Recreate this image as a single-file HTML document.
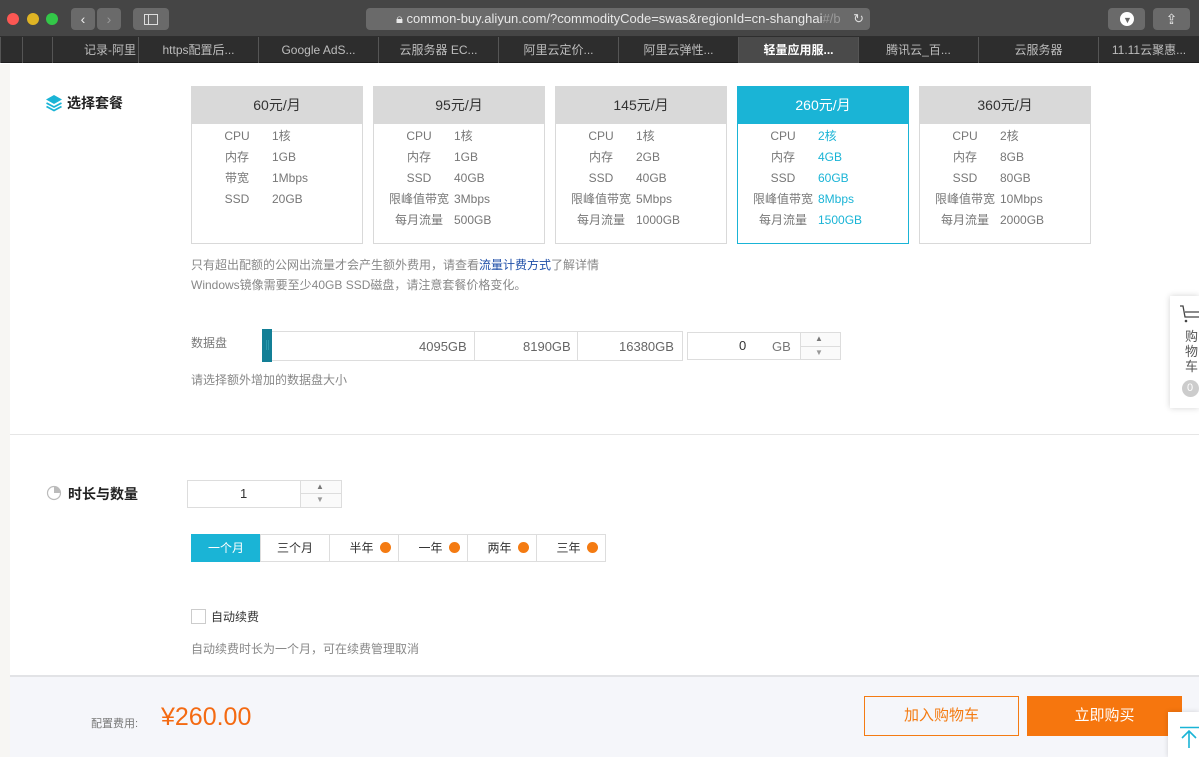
<!DOCTYPE html>
<html><head><meta charset="utf-8"><style>
*{margin:0;padding:0;box-sizing:border-box}
body{width:1199px;height:757px;overflow:hidden;position:relative;background:#fff;font-family:"Liberation Sans","Noto Sans CJK SC",sans-serif;color:#333}
.abs{position:absolute}
.tb{left:0;top:0;width:1199px;height:37px;background:#454545;border-bottom:1px solid #2e2e2e}
.btn{background:#6a6a6a;border-radius:4px;height:22px;top:8px}
.tabs{left:0;top:37px;width:1199px;height:26px;background:#2d2d2d;border-bottom:1px solid #1e1e1e}
.tab{position:absolute;top:0;height:26px;border-left:1px solid #555;color:#bdbdbd;font-size:12px;line-height:26px;text-align:center;width:120px}
.card{position:absolute;top:86px;width:172px;height:158px;border:1px solid #d9d9d9}
.card .h{height:37px;background:#d9d9d9;text-align:center;line-height:37px;font-size:14px;color:#333}
.card .r{position:relative;height:21px;font-size:12px;color:#777;line-height:21px}
.card .r .l{position:absolute;left:12px;width:66px;text-align:center}
.card .r .v{position:absolute;left:80px}
.card .b{padding-top:2px}
.sel{border-color:#1ab4d6}
.sel .h{background:#1ab4d6;color:#fff}
.sel .v{color:#1ab4d6}
.note{font-size:12px;color:#888}
.seg{position:absolute;top:534px;height:28px;width:70px;border:1px solid #ddd;font-size:12px;line-height:26px;text-align:center;color:#333;background:#fff}
.hui{display:inline-block;width:11px;height:11px;border-radius:50%;background:#f47b12;vertical-align:-1px;margin-left:6px}
</style></head><body>
<div class="abs tb"></div>
<div class="abs" style="left:7px;top:13px;width:12px;height:12px;border-radius:50%;background:#fc5753"></div>
<div class="abs" style="left:27px;top:13px;width:12px;height:12px;border-radius:50%;background:#dfb424"></div>
<div class="abs" style="left:46px;top:13px;width:12px;height:12px;border-radius:50%;background:#33c748"></div>
<div class="abs btn" style="left:71px;width:24px;color:#eee;font-size:14px;text-align:center;line-height:22px">&#8249;</div>
<div class="abs btn" style="left:97px;width:24px;color:#999;font-size:14px;text-align:center;line-height:22px">&#8250;</div>
<div class="abs btn" style="left:133px;width:36px"><div class="abs" style="left:11px;top:6px;width:14px;height:11px;border:1px solid #ddd"></div><div class="abs" style="left:15px;top:6px;width:1px;height:11px;background:#ddd"></div></div>
<div class="abs btn" style="left:366px;width:504px;color:#e8e8e8;font-size:13px;line-height:22px;padding-left:30px;white-space:nowrap;overflow:hidden">&#128274;&#xFE0E; common-buy.aliyun.com/?commodityCode=swas&amp;regionId=cn-shanghai<span style="color:#999">#/b</span><span class="abs" style="right:6px;top:0;color:#ddd">&#8635;</span></div>
<div class="abs btn" style="left:1108px;width:37px"><div class="abs" style="left:12px;top:4px;width:14px;height:14px;border-radius:50%;background:#fff"></div><div class="abs" style="left:15px;top:8px;color:#666;font-size:9px;line-height:8px">&#9660;</div></div>
<div class="abs btn" style="left:1153px;width:37px;color:#eee;text-align:center;line-height:22px;font-size:14px">&#8682;</div>
<div class="abs tabs">
<div class="tab" style="left:0;width:22px"></div><div class="tab" style="left:22px;width:30px"></div>
<div class="tab" style="left:52px;width:86px;text-align:right;padding-right:2px">记录-阿里</div>
<div class="tab" style="left:138px">https配置后...</div>
<div class="tab" style="left:258px">Google AdS...</div>
<div class="tab" style="left:378px">云服务器 EC...</div>
<div class="tab" style="left:498px">阿里云定价...</div>
<div class="tab" style="left:618px">阿里云弹性...</div>
<div class="tab" style="left:738px;background:#4a4a4a;color:#fff;font-weight:bold">轻量应用服...</div>
<div class="tab" style="left:858px">腾讯云_百...</div>
<div class="tab" style="left:978px">云服务器</div>
<div class="tab" style="left:1098px;width:101px">11.11云聚惠...</div>
</div>
<div class="abs" style="left:0;top:64px;width:10px;height:693px;background:#f7f6f3"></div>
<svg class="abs" style="left:45px;top:94px" width="18" height="18" viewBox="0 0 18 18"><path d="M9 1 L17 5.5 L9 10 L1 5.5Z" fill="#1ab4d6"/><path d="M1.5 9 L9 13 L16.5 9" stroke="#1ab4d6" stroke-width="1.8" fill="none"/><path d="M1.5 12.5 L9 16.5 L16.5 12.5" stroke="#1ab4d6" stroke-width="1.8" fill="none"/></svg>
<div class="abs" style="left:67px;top:93px;font-size:14px;font-weight:bold;color:#222">选择套餐</div>

<div class="card" style="left:191px"><div class="h">60元/月</div><div class="b">
<div class="r"><span class="l">CPU</span><span class="v">1核</span></div><div class="r"><span class="l">内存</span><span class="v">1GB</span></div><div class="r"><span class="l">带宽</span><span class="v">1Mbps</span></div><div class="r"><span class="l">SSD</span><span class="v">20GB</span></div></div></div>
<div class="card" style="left:373px"><div class="h">95元/月</div><div class="b">
<div class="r"><span class="l">CPU</span><span class="v">1核</span></div><div class="r"><span class="l">内存</span><span class="v">1GB</span></div><div class="r"><span class="l">SSD</span><span class="v">40GB</span></div><div class="r"><span class="l">限峰值带宽</span><span class="v">3Mbps</span></div><div class="r"><span class="l">每月流量</span><span class="v">500GB</span></div></div></div>
<div class="card" style="left:555px"><div class="h">145元/月</div><div class="b">
<div class="r"><span class="l">CPU</span><span class="v">1核</span></div><div class="r"><span class="l">内存</span><span class="v">2GB</span></div><div class="r"><span class="l">SSD</span><span class="v">40GB</span></div><div class="r"><span class="l">限峰值带宽</span><span class="v">5Mbps</span></div><div class="r"><span class="l">每月流量</span><span class="v">1000GB</span></div></div></div>
<div class="card sel" style="left:737px"><div class="h">260元/月</div><div class="b">
<div class="r"><span class="l">CPU</span><span class="v">2核</span></div><div class="r"><span class="l">内存</span><span class="v">4GB</span></div><div class="r"><span class="l">SSD</span><span class="v">60GB</span></div><div class="r"><span class="l">限峰值带宽</span><span class="v">8Mbps</span></div><div class="r"><span class="l">每月流量</span><span class="v">1500GB</span></div></div></div>
<div class="card" style="left:919px"><div class="h">360元/月</div><div class="b">
<div class="r"><span class="l">CPU</span><span class="v">2核</span></div><div class="r"><span class="l">内存</span><span class="v">8GB</span></div><div class="r"><span class="l">SSD</span><span class="v">80GB</span></div><div class="r"><span class="l">限峰值带宽</span><span class="v">10Mbps</span></div><div class="r"><span class="l">每月流量</span><span class="v">2000GB</span></div></div></div>

<div class="abs note" style="left:191px;top:256px">只有超出配额的公网出流量才会产生额外费用，请查看<span style="color:#1f4fa8">流量计费方式</span>了解详情</div>
<div class="abs note" style="left:191px;top:276px">Windows镜像需要至少40GB SSD磁盘，请注意套餐价格变化。</div>

<div class="abs note" style="left:191px;top:334px;color:#777">数据盘</div>
<div class="abs" style="left:262px;top:331px;width:421px;height:30px;border:1px solid #ddd"></div>
<div class="abs" style="left:474px;top:331px;width:1px;height:30px;background:#ddd"></div>
<div class="abs" style="left:577px;top:331px;width:1px;height:30px;background:#ddd"></div>
<div class="abs" style="left:262px;top:329px;width:10px;height:33px;background:#137f96"></div>
<div class="abs" style="left:266px;top:340px;width:1px;height:10px;background:#2a98ad"></div><div class="abs" style="left:268px;top:340px;width:1px;height:10px;background:#2a98ad"></div>
<div class="abs note" style="left:419px;top:339px;color:#666;font-size:13px">4095GB</div>
<div class="abs note" style="left:523px;top:339px;color:#666;font-size:13px">8190GB</div>
<div class="abs note" style="left:619px;top:339px;color:#666;font-size:13px">16380GB</div>
<div class="abs" style="left:687px;top:332px;width:154px;height:28px;border:1px solid #ddd"></div>
<div class="abs" style="left:800px;top:332px;width:41px;height:28px;border:1px solid #ddd;background:#fafafa"></div>
<div class="abs" style="left:800px;top:346px;width:41px;height:1px;background:#ddd"></div>
<div class="abs" style="left:815px;top:334px;font-size:8px;color:#777">&#9650;</div>
<div class="abs" style="left:815px;top:348px;font-size:8px;color:#999">&#9660;</div>
<div class="abs" style="left:739px;top:338px;font-size:13px;color:#333">0</div>
<div class="abs" style="left:772px;top:339px;font-size:13px;color:#777">GB</div>
<div class="abs note" style="left:191px;top:371px">请选择额外增加的数据盘大小</div>

<div class="abs" style="left:10px;top:434px;width:1189px;height:1px;background:#e6e6e6"></div>

<svg class="abs" style="left:46px;top:485px" width="16" height="16" viewBox="0 0 16 16"><circle cx="8" cy="8" r="6.5" fill="none" stroke="#bbb" stroke-width="1.2"/><path d="M8 8 V1.5 A6.5 6.5 0 0 1 14.5 8Z" fill="#bbb"/></svg>
<div class="abs" style="left:68px;top:484px;font-size:14px;font-weight:bold;color:#222">时长与数量</div>
<div class="abs" style="left:187px;top:480px;width:155px;height:28px;border:1px solid #ddd"></div>
<div class="abs" style="left:300px;top:480px;width:42px;height:28px;border:1px solid #ddd;background:#fafafa"></div>
<div class="abs" style="left:300px;top:493px;width:42px;height:1px;background:#ddd"></div>
<div class="abs" style="left:316px;top:482px;font-size:8px;color:#777">&#9650;</div>
<div class="abs" style="left:316px;top:495px;font-size:8px;color:#999">&#9660;</div>
<div class="abs" style="left:240px;top:486px;font-size:13px">1</div>

<div class="seg" style="left:191px;background:#1ab4d6;border-color:#1ab4d6;color:#fff">一个月</div>
<div class="seg" style="left:260px">三个月</div>
<div class="seg" style="left:329px;padding-left:12px">半年<span class="hui"></span></div>
<div class="seg" style="left:398px;padding-left:12px">一年<span class="hui"></span></div>
<div class="seg" style="left:467px;padding-left:12px">两年<span class="hui"></span></div>
<div class="seg" style="left:536px;padding-left:12px">三年<span class="hui"></span></div>

<div class="abs" style="left:191px;top:609px;width:15px;height:15px;border:1px solid #ccc"></div>
<div class="abs" style="left:211px;top:608px;font-size:12px;color:#333">自动续费</div>
<div class="abs note" style="left:191px;top:640px">自动续费时长为一个月，可在续费管理取消</div>

<div class="abs" style="left:1170px;top:296px;width:29px;height:112px;background:#fff;box-shadow:0 0 6px rgba(0,0,0,.18)"></div>
<svg class="abs" style="left:1180px;top:304px" width="19" height="20" viewBox="0 0 19 20"><path d="M0 2 H3 L5 13 H19 M5 8 H19" stroke="#444" stroke-width="1.3" fill="none"/><circle cx="6" cy="17" r="1.3" fill="#444"/></svg>
<div class="abs" style="left:1185px;top:329px;width:14px;font-size:13px;line-height:15px;color:#555">购物车</div>
<div class="abs" style="left:1182px;top:380px;width:17px;height:17px;border-radius:50%;background:#ccc;color:#fff;font-size:11px;line-height:17px;padding-left:5px">0</div>

<div class="abs" style="left:10px;top:675px;width:1189px;height:82px;background:#f5f6fa;border-top:2px solid #e2e3e6"></div>
<div class="abs" style="left:91px;top:715px;font-size:11px;color:#777">配置费用:</div>
<div class="abs" style="left:161px;top:703px;font-size:25px;color:#f46a12">¥260.00</div>
<div class="abs" style="left:864px;top:696px;width:155px;height:40px;border:1px solid #f47b12;color:#f47b12;font-size:15px;text-align:center;line-height:38px">加入购物车</div>
<div class="abs" style="left:1027px;top:696px;width:155px;height:40px;background:#f6760e;color:#fff;font-size:15px;text-align:center;line-height:40px">立即购买</div>
<div class="abs" style="left:1168px;top:712px;width:31px;height:45px;background:#fff;box-shadow:0 0 5px rgba(0,0,0,.15)"></div>
<svg class="abs" style="left:1178px;top:726px" width="21" height="22" viewBox="0 0 21 22"><path d="M2 1.5 H21 M11 5 V22 M4 12 L11 5 L18 12" stroke="#1ab4d6" stroke-width="1.6" fill="none"/></svg>
</body></html>
